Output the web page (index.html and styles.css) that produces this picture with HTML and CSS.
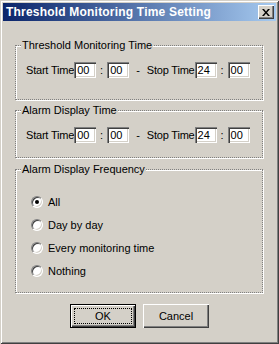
FILE: index.html
```html
<!DOCTYPE html>
<html>
<head>
<meta charset="utf-8">
<link rel="stylesheet" href="styles.css">
</head>
<body>
<div class="window">
  <div class="titlebar">
    <span class="title">Threshold Monitoring Time Setting</span>
    <span class="close"><svg width="8" height="7" viewBox="0 0 8 7"><path d="M0 0h2l2 2.5 2-2.5h2l-3 3.5 3 3.5h-2l-2-2.5-2 2.5h-2l3-3.5z" fill="#000"/></svg></span>
  </div>
  <div class="content">
    <div class="group g1">
      <div class="legend">Threshold Monitoring Time</div>
      <div class="row">
        <span class="lbl">Start Time</span><span class="time">00</span><span class="colon">:</span><span class="time">00</span>
        <span class="dash">-</span>
        <span class="lbl">Stop Time</span><span class="time">24</span><span class="colon">:</span><span class="time">00</span>
      </div>
    </div>
    <div class="group g2">
      <div class="legend">Alarm Display Time</div>
      <div class="row">
        <span class="lbl">Start Time</span><span class="time">00</span><span class="colon">:</span><span class="time">00</span>
        <span class="dash">-</span>
        <span class="lbl">Stop Time</span><span class="time">24</span><span class="colon">:</span><span class="time">00</span>
      </div>
    </div>
    <div class="group g3">
      <div class="legend">Alarm Display Frequency</div>
      <div class="radios">
        <div class="opt"><span class="radio checked"></span><span>All</span></div>
        <div class="opt"><span class="radio"></span><span>Day by day</span></div>
        <div class="opt"><span class="radio"></span><span>Every monitoring time</span></div>
        <div class="opt"><span class="radio"></span><span>Nothing</span></div>
      </div>
    </div>
    <div class="buttons">
      <div class="btn default"><span class="focus">OK</span></div>
      <div class="btn">Cancel</div>
    </div>
  </div>
</div>
</body>
</html>
```
FILE: styles.css
```css
* { box-sizing: border-box; }
html, body { margin: 0; padding: 0; }
body {
  background: #d4d0c8;
  font-family: "Liberation Sans", Arial, sans-serif;
  font-size: 11px;
  color: #000;
}
.window {
  width: 279px;
  height: 344px;
  padding: 3px;
  background: #d4d0c8;
  box-shadow: inset 1px 1px 0 #d4d0c8, inset -1px -1px 0 #404040,
              inset 2px 2px 0 #fff, inset -2px -2px 0 #808080;
  display: flex;
  flex-direction: column;
}
.titlebar {
  height: 18px;
  display: flex;
  align-items: center;
  padding: 0 2px 0 3px;
  background: linear-gradient(to right, #0a246a, #a6caf0);
  color: #fff;
  font-weight: bold;
  font-size: 12px;
  letter-spacing: 0.2px;
}
.title { flex: 1; white-space: nowrap; }
.close {
  width: 16px;
  height: 14px;
  background: #d4d0c8;
  box-shadow: inset 1px 1px 0 #fff, inset -1px -1px 0 #404040, inset -2px -2px 0 #808080;
  display: flex;
  align-items: center;
  justify-content: center;
}
.close svg { display: block; }
.content {
  display: flex;
  flex-direction: column;
  padding: 0 13px 0 12px;
}
.group {
  border: 1px dotted #808080;
  box-shadow: 1px 1px 0 #fff, inset 1px 1px 0 #fff;
  padding: 0 10px;
}
.g1 { margin-top: 24px; height: 55px; }
.g2 { margin-top: 10px; height: 48px; }
.g3 { margin-top: 11px; height: 124px; }
.legend {
  width: max-content;
  margin: -7px 0 0 -5px;
  padding: 0 1px;
  background: #d4d0c8;
  line-height: 13px;
  height: 13px;
}
.row {
  display: flex;
  align-items: center;
  height: 16px;
  margin-top: 10px;
  white-space: nowrap;
}
.lbl { letter-spacing: -0.2px; }
.time {
  width: 22px;
  height: 16px;
  line-height: 16px;
  padding-left: 3px;
  background: #fff;
  box-shadow: inset 1px 1px 0 #808080, inset 2px 2px 0 #404040,
              inset -1px -1px 0 #fff, inset -2px -2px 0 #d4d0c8;
}
.colon { width: 11px; text-align: center; }
.dash { margin: 0 7px; }
.radios {
  display: flex;
  flex-direction: column;
  gap: 10px;
  margin: 19px 0 0 5px;
}
.opt {
  display: flex;
  align-items: center;
  gap: 5px;
  height: 13px;
}
.radio {
  width: 12px;
  height: 12px;
  border-radius: 50%;
  border: 1px solid;
  border-color: #808080 #fff #fff #808080;
  background: #fff;
  box-shadow: inset 1px 1px 0 #404040, inset -1px -1px 0 #d4d0c8;
  display: flex;
  align-items: center;
  justify-content: center;
}
.radio.checked::after {
  content: "";
  width: 4px;
  height: 4px;
  border-radius: 50%;
  background: #000;
}
.buttons {
  display: flex;
  justify-content: center;
  gap: 7px;
  margin-top: 11px;
  padding-left: 1px;
}
.btn {
  width: 66px;
  height: 24px;
  background: #d4d0c8;
  box-shadow: inset 1px 1px 0 #fff, inset -1px -1px 0 #404040, inset -2px -2px 0 #808080;
  display: flex;
  align-items: center;
  justify-content: center;
}
.btn.default {
  border: 1px solid #000;
  padding: 3px;
}
.focus {
  width: 100%;
  height: 100%;
  border: 1px dotted #000;
  display: flex;
  align-items: center;
  justify-content: center;
}
```
